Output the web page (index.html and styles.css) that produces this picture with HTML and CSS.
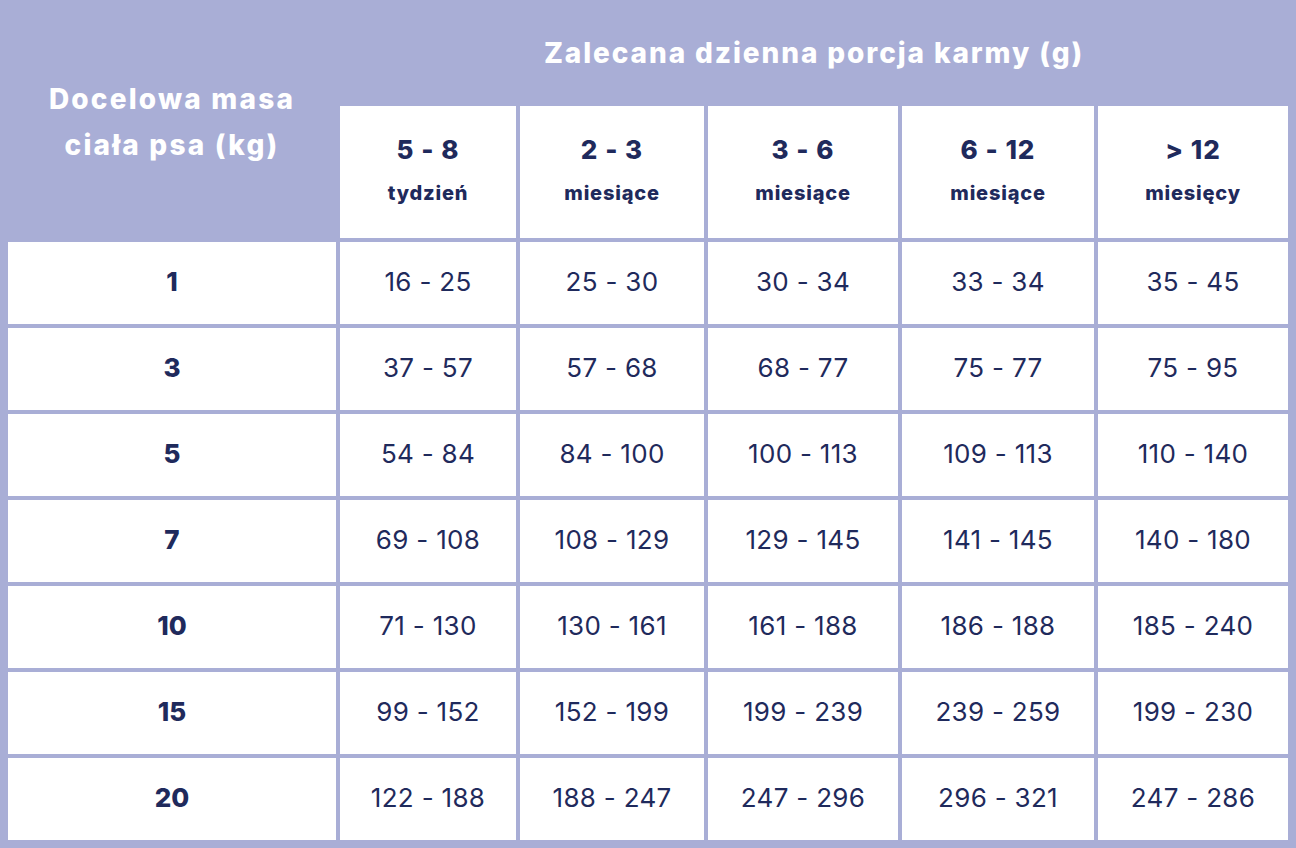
FILE: index.html
```html
<!DOCTYPE html>
<html lang="pl">
<head>
<meta charset="utf-8">
<title>Zalecana dzienna porcja karmy</title>
<link rel="stylesheet" href="styles.css">
</head>
<body>
<div class="table">
  <div class="corner">Docelowa masa<br>ciała psa (kg)</div>
  <div class="title">Zalecana dzienna porcja karmy (g)</div>
  <div class="head"><span class="range">5 - 8</span><span class="unit">tydzień</span></div>
  <div class="head"><span class="range">2 - 3</span><span class="unit">miesiące</span></div>
  <div class="head"><span class="range">3 - 6</span><span class="unit">miesiące</span></div>
  <div class="head"><span class="range">6 - 12</span><span class="unit">miesiące</span></div>
  <div class="head"><span class="range">&gt; 12</span><span class="unit">miesięcy</span></div>

  <div class="label">1</div><div class="cell">16 - 25</div><div class="cell">25 - 30</div><div class="cell">30 - 34</div><div class="cell">33 - 34</div><div class="cell">35 - 45</div>
  <div class="label">3</div><div class="cell">37 - 57</div><div class="cell">57 - 68</div><div class="cell">68 - 77</div><div class="cell">75 - 77</div><div class="cell">75 - 95</div>
  <div class="label">5</div><div class="cell">54 - 84</div><div class="cell">84 - 100</div><div class="cell">100 - 113</div><div class="cell">109 - 113</div><div class="cell">110 - 140</div>
  <div class="label">7</div><div class="cell">69 - 108</div><div class="cell">108 - 129</div><div class="cell">129 - 145</div><div class="cell">141 - 145</div><div class="cell">140 - 180</div>
  <div class="label">10</div><div class="cell">71 - 130</div><div class="cell">130 - 161</div><div class="cell">161 - 188</div><div class="cell">186 - 188</div><div class="cell">185 - 240</div>
  <div class="label">15</div><div class="cell">99 - 152</div><div class="cell">152 - 199</div><div class="cell">199 - 239</div><div class="cell">239 - 259</div><div class="cell">199 - 230</div>
  <div class="label">20</div><div class="cell">122 - 188</div><div class="cell">188 - 247</div><div class="cell">247 - 296</div><div class="cell">296 - 321</div><div class="cell">247 - 286</div>
</div>
</body>
</html>
```
FILE: styles.css
```css
html, body {
  margin: 0;
  padding: 0;
  background: #a9aed6;
}
body {
  font-family: Inter, "Noto Sans", sans-serif;
  color: #1f2a5c;
}
.table {
  display: grid;
  grid-template-columns: 328px 176px 184px 190px 192px 190px;
  grid-template-rows: 94px 132px repeat(7, 82px);
  gap: 4px;
  padding: 8px;
  width: 1296px;
  height: 848px;
  box-sizing: border-box;
  background: #a9aed6;
}
.corner {
  grid-row: 1 / span 2;
  grid-column: 1;
  display: flex;
  align-items: center;
  justify-content: center;
  text-align: center;
  color: #ffffff;
  font-weight: 800;
  font-size: 28px;
  letter-spacing: 2.2px;
  line-height: 46px;
  padding-bottom: 2px;
}
.title {
  grid-row: 1;
  grid-column: 2 / span 5;
  display: flex;
  align-items: center;
  justify-content: center;
  color: #ffffff;
  font-weight: 800;
  font-size: 28px;
  letter-spacing: 1.9px;
  padding-bottom: 4px;
}
.head {
  background: #ffffff;
  display: flex;
  flex-direction: column;
  align-items: center;
  justify-content: center;
  font-weight: 800;
  gap: 14px;
  padding-bottom: 4px;
}
.range {
  font-size: 26px;
  line-height: 32px;
  letter-spacing: 1px;
}
.unit {
  font-size: 20px;
  line-height: 26px;
  letter-spacing: 0.8px;
}
.label, .cell {
  background: #ffffff;
  display: flex;
  align-items: center;
  justify-content: center;
  font-size: 26px;
  padding-bottom: 4px;
}
.label {
  font-weight: 800;
}
.cell {
  font-weight: 400;
  letter-spacing: 0.3px;
}
```
